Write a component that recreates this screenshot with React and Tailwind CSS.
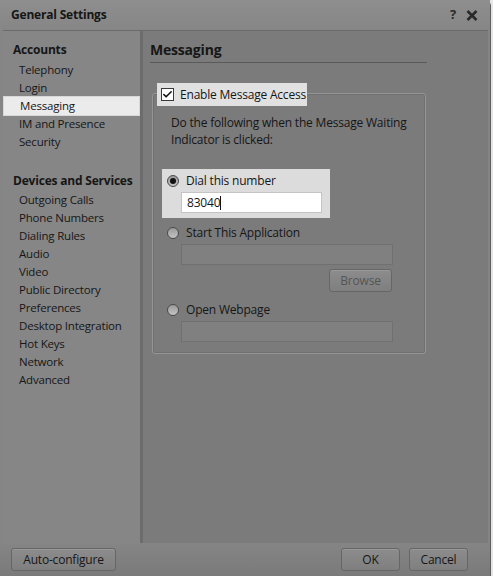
import { Check } from 'lucide-react'

const accounts = ['Telephony', 'Login', 'Messaging', 'IM and Presence', 'Security']
const devices = [
  'Outgoing Calls',
  'Phone Numbers',
  'Dialing Rules',
  'Audio',
  'Video',
  'Public Directory',
  'Preferences',
  'Desktop Integration',
  'Hot Keys',
  'Network',
  'Advanced',
]

function NavItem({ label, active }) {
  if (active) {
    return (
      <div className="h-[20px] -my-px flex items-center pl-[16px] bg-[#ebebeb] border border-[#d8d8d8]">
        {label}
      </div>
    )
  }
  return <div className="h-[18px] flex items-center pl-[16px]">{label}</div>
}

function Radio({ checked }) {
  return (
    <span className="w-[12px] h-[12px] rounded-full border border-[#4a4a4a] bg-gradient-to-b from-[#9a9a9a] to-[#c4c4c4] flex items-center justify-center shrink-0">
      {checked && <span className="w-[6px] h-[6px] rounded-full bg-[#111]" />}
    </span>
  )
}

function Btn({ children, className = '', disabled }) {
  return (
    <div
      className={`h-[23px] flex items-center justify-center rounded-[3px] border border-[#666] bg-gradient-to-b from-[#8c8c8c] to-[#7f7f7f] shadow-[inset_0_1px_0_#999] ${disabled ? 'text-[#555]' : 'text-[#161616]'} ${className}`}
    >
      {children}
    </div>
  )
}

export default function App() {
  return (
    <div className="w-[493px] h-[576px] bg-[#e6e6e6] font-['Open_Sans',sans-serif] text-[11.5px] text-[#161616] tracking-[-0.2px] overflow-hidden">
      <div className="w-[491px] h-[576px] bg-[#858585] rounded-t-[6px] border-r border-[#5e5e5e] flex flex-col">
        {/* title bar */}
        <div className="h-[30px] flex items-center justify-between pl-[11px] pr-[12px] bg-gradient-to-b from-[#8e8e8e] to-[#868686] shrink-0">
          <span className="font-bold text-[12px]">General Settings</span>
          <div className="flex items-center gap-[10px] font-bold text-[#2a2a2a]">
            <span className="text-[13px]">?</span>
            <svg width="12" height="11" viewBox="0 0 12 11">
              <path d="M1.5 1 L10.5 10 M10.5 1 L1.5 10" stroke="#2a2a2a" strokeWidth="2.6" />
            </svg>
          </div>
        </div>

        {/* body */}
        <div className="h-[513px] ml-[3px] mr-[2px] flex border-t border-[#6a6a6a]">
          <div className="w-[140px] shrink-0 bg-[#868686] pt-[10px] border-r-[3px] border-[#6c6c6c]">
            <div className="h-[18px] flex items-center pl-[10px] font-bold text-[12px] mb-[2px]">Accounts</div>
            {accounts.map((a) => (
              <NavItem key={a} label={a} active={a === 'Messaging'} />
            ))}
            <div className="h-[18px] flex items-center pl-[10px] font-bold text-[12px] mt-[21px] mb-[1px]">
              Devices and Services
            </div>
            {devices.map((d) => (
              <NavItem key={d} label={d} />
            ))}
          </div>

          <div className="flex-1 bg-[#7b7b7b] pl-[7px] pt-[8px]">
            <div className="w-[277px] h-[24px] border-b border-[#5a5a5a] font-bold text-[14px] flex items-start">
              Messaging
            </div>

            <div className="relative ml-[2px] mt-[30px] w-[274px] h-[261px] rounded-[3px] border border-[#959595] shadow-[inset_0_0_0_1px_#707070]">
              <div className="absolute -top-[11px] left-[4px] h-[23px] w-[150px] bg-[#e1e1e1] flex items-center pl-[4px] gap-[6px]">
                <span className="w-[13px] h-[13px] bg-white border border-[#3a3a3a] flex items-center justify-center">
                  <Check className="w-[11px] h-[11px] text-[#111]" strokeWidth={3.5} />
                </span>
                <span className="text-[12px]">Enable Message Access</span>
              </div>

              <div className="pl-[18px] pt-[20px] leading-[17px] text-[12px]">
                Do the following when the Message Waiting
                <br />
                Indicator is clicked:
              </div>

              <div className="ml-[9px] mt-[21px] w-[168px] h-[49px] bg-[#dcdcdc] pl-[5px] pt-[5px]">
                <div className="flex items-center gap-[7px] h-[13px]">
                  <Radio checked />
                  <span className="text-[12px]">Dial this number</span>
                </div>
                <div className="ml-[14px] mt-[5px] w-[141px] h-[21px] bg-white border border-[#c4c4c4] flex items-center pl-[5px] text-[12px]">
                  83040<span className="w-px h-[14px] bg-[#111]" />
                </div>
              </div>

              <div className="ml-[14px] mt-[8px] flex items-center gap-[7px] h-[13px]">
                <Radio />
                <span className="text-[12px]">Start This Application</span>
              </div>
              <div className="ml-[28px] mt-[5px] w-[212px] h-[21px] bg-[#808080] border border-[#707070]" />
              <div className="ml-[176px] mt-[4px] w-[63px]">
                <Btn disabled className="w-[63px] text-[12px]">
                  Browse
                </Btn>
              </div>

              <div className="ml-[14px] mt-[11px] flex items-center gap-[7px] h-[13px]">
                <Radio />
                <span className="text-[12px]">Open Webpage</span>
              </div>
              <div className="ml-[28px] mt-[5px] w-[212px] h-[21px] bg-[#808080] border border-[#707070]" />
            </div>
          </div>
        </div>

        {/* footer */}
        <div className="flex-1 flex items-start pt-[5px] px-[11px] bg-gradient-to-b from-[#858585] to-[#7a7a7a] text-[12px]">
          <Btn className="w-[105px]">Auto-configure</Btn>
          <div className="flex-1" />
          <Btn className="w-[59px]">OK</Btn>
          <Btn className="w-[59px] ml-[9px] mr-[11px]">Cancel</Btn>
        </div>
      </div>
    </div>
  )
}
